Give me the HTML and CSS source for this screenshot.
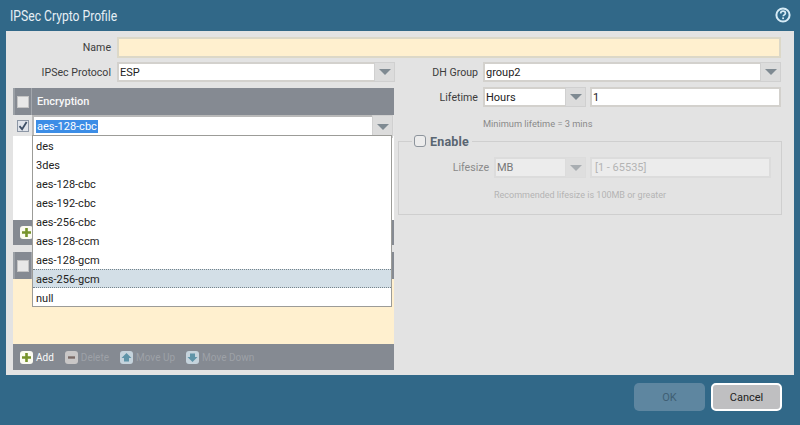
FILE: index.html
```html
<!DOCTYPE html>
<html lang="en">
<head>
<meta charset="utf-8">
<title>IPSec Crypto Profile</title>
<link rel="stylesheet" href="styles.css">
</head>
<body>
<div class="dialog">
  <header class="titlebar">
    <h1 class="title">IPSec Crypto Profile</h1>
    <svg class="help" viewBox="0 0 16 16" width="16" height="16" aria-hidden="true">
      <circle cx="8" cy="8" r="6.6" fill="#2f6a8c" stroke="#d6ebf6" stroke-width="2"/>
      <path d="M5.7 6.4c0-1.4 1-2.2 2.4-2.2s2.3.8 2.3 2c0 1.7-2.2 1.6-2.2 3.1" fill="none" stroke="#d6ebf6" stroke-width="1.7"/>
      <rect x="7.2" y="10.4" width="1.8" height="1.7" fill="#d6ebf6"/>
    </svg>
  </header>
  <main class="panel">
    <div class="row name-row">
      <label class="label label-main">Name</label>
      <div class="field field-req"></div>
    </div>
    <div class="columns">
      <section class="left">
        <div class="row proto-row">
          <label class="label label-main">IPSec Protocol</label>
          <div class="select grow"><span class="value">ESP</span><span class="arrow"><i></i></span></div>
        </div>
        <div class="grid enc">
          <div class="grid-head">
            <span class="head-check"><span class="check"></span></span>
            <span class="head-text">Encryption</span>
          </div>
          <div class="enc-row">
            <span class="check check-on">
              <svg viewBox="0 0 12 12" width="12" height="12" aria-hidden="true"><path d="M2.5 6.2l2.6 3L9.6 2" fill="none" stroke="#3d4f66" stroke-width="1.8"/></svg>
            </span>
            <div class="select combo"><span class="value"><span class="selected">aes-128-cbc</span></span><span class="arrow"><i></i></span></div>
          </div>
          <div class="enc-body"></div>
          <div class="toolbar toolbar-short">
            <svg class="tool-icon" viewBox="0 0 13 13" width="13" height="13" aria-hidden="true"><rect width="13" height="13" rx="3" fill="#fbfbf2"/><path d="M6.5 2v9M2 6.5h9" stroke="#76932b" stroke-width="2.6"/></svg>
          </div>
        </div>
        <div class="grid auth">
          <div class="grid-head">
            <span class="head-check"><span class="check"></span></span>
          </div>
          <div class="auth-body"></div>
          <div class="toolbar">
            <span class="tool tool-on">
              <svg class="tool-icon" viewBox="0 0 13 13" width="13" height="13" aria-hidden="true"><rect width="13" height="13" rx="3" fill="#fbfbf2"/><path d="M6.5 2v9M2 6.5h9" stroke="#76932b" stroke-width="2.6"/></svg>
              Add
            </span>
            <span class="tool">
              <svg class="tool-icon" viewBox="0 0 13 13" width="13" height="13" aria-hidden="true"><rect width="13" height="13" rx="3" fill="#c9c7c7"/><path d="M3 6.5h7" stroke="#7a6a66" stroke-width="2.4"/></svg>
              Delete
            </span>
            <span class="tool">
              <svg class="tool-icon" viewBox="0 0 13 13" width="13" height="13" aria-hidden="true"><rect width="13" height="13" rx="3" fill="#c5d3dc"/><path d="M6.5 2L11.5 7H9v3.5H4V7H1.5z" fill="#5f94a8"/></svg>
              Move Up
            </span>
            <span class="tool">
              <svg class="tool-icon" viewBox="0 0 13 13" width="13" height="13" aria-hidden="true"><rect width="13" height="13" rx="3" fill="#c5d3dc"/><path d="M6.5 11L11.5 6H9V2.5H4V6H1.5z" fill="#5f94a8"/></svg>
              Move Down
            </span>
          </div>
        </div>
      </section>
      <section class="right">
        <div class="row dh-row">
          <label class="label label-right">DH Group</label>
          <div class="select grow"><span class="value">group2</span><span class="arrow"><i></i></span></div>
        </div>
        <div class="row life-row">
          <label class="label label-right">Lifetime</label>
          <div class="select unit"><span class="value">Hours</span><span class="arrow"><i></i></span></div>
          <div class="field grow"><span class="value">1</span></div>
        </div>
        <p class="hint hint-life">Minimum lifetime = 3 mins</p>
        <fieldset class="lifesize">
          <legend class="legend"><span class="round-check"></span><span class="legend-text">Enable</span></legend>
          <div class="row size-row">
            <label class="label label-size">Lifesize</label>
            <div class="select unit-off off"><span class="value">MB</span><span class="arrow"><i></i></span></div>
            <div class="field off grow"><span class="value placeholder">[1 - 65535]</span></div>
          </div>
          <p class="hint hint-size">Recommended lifesize is 100MB or greater</p>
        </fieldset>
      </section>
    </div>
    <ul class="menu">
      <li>des</li>
      <li>3des</li>
      <li>aes-128-cbc</li>
      <li>aes-192-cbc</li>
      <li>aes-256-cbc</li>
      <li>aes-128-ccm</li>
      <li>aes-128-gcm</li>
      <li class="active">aes-256-gcm</li>
      <li>null</li>
    </ul>
  </main>
  <footer class="footer">
    <button class="btn btn-ok" type="button">OK</button>
    <button class="btn btn-cancel" type="button">Cancel</button>
  </footer>
</div>
</body>
</html>
```
FILE: styles.css
```css
* { box-sizing: border-box; }
html, body { margin: 0; padding: 0; }
body {
  width: 800px;
  height: 425px;
  overflow: hidden;
  background: #316888;
  font-family: "Roboto", "Liberation Sans", Arial, sans-serif;
  font-size: 11px;
  color: #222;
}
.dialog { display: flex; flex-direction: column; height: 425px; }
.titlebar {
  height: 31px;
  display: flex;
  align-items: center;
  justify-content: space-between;
  padding: 0 10px;
}
.title {
  margin: 1px 0 0;
  font-size: 15px;
  font-weight: 400;
  color: #e6eff5;
  transform: scaleX(0.81);
  transform-origin: left center;
}
.help { display: block; margin-top: -1px; margin-right: -1px; }
.panel {
  position: relative;
  height: 344px;
  margin: 0 6px;
  padding: 6px 13px 5px 7px;
  background: #e3e3e3;
}
.row { display: flex; align-items: stretch; }
.label { display: flex; align-items: center; justify-content: flex-end; color: #3c3c3c; font-size: 10.6px; }
.label-main { width: 104px; padding-right: 6px; flex: none; }
.name-row { height: 21px; }
.field, .select {
  display: flex;
  align-items: stretch;
  background: #fff;
  border: 2px solid #d3d1cd;
  height: 100%;
}
.field-req { flex: 1; background: #fff0cf; border-color: #dcd8c8; }
.grow { flex: 1; min-width: 0; }
.value { flex: 1; display: flex; align-items: center; padding-left: 1px; color: #222; }
.arrow {
  width: 21px;
  margin: -2px -2px -2px 0;
  background: #dcdcdc;
  border: 1px solid #d0d0d0;
  display: flex;
  align-items: center;
  justify-content: center;
}
.arrow i {
  width: 0;
  height: 0;
  border-left: 6px solid transparent;
  border-right: 6px solid transparent;
  border-top: 6px solid #7f8a92;
}
.columns { display: flex; margin-top: 4px; gap: 4px; }
.left { width: 381px; flex: none; }
.right { flex: 1; min-width: 0; }
.proto-row { height: 20px; margin-right: -1px; }
.proto-row .select, .dh-row .select { height: 20px; }
.grid { margin-top: 6px; }
.grid-head {
  display: flex;
  height: 27px;
  background: #858a92;
  color: #f8f8f8;
}
.head-check {
  width: 19px;
  display: flex;
  align-items: center;
  justify-content: center;
  border-right: 1px solid #a3a7ad;
  border-left: 2px solid #9ba0a6;
}
.head-text { display: flex; align-items: center; padding-left: 5px; font-weight: 500; }
.check {
  display: flex;
  align-items: center;
  justify-content: center;
  width: 12px;
  height: 12px;
  background: #e8e8e8;
  border: 1px solid #c4c4c4;
}
.check-on { background: #dfe3ea; border-color: #8d97a6; margin: 0 3px 0 4px; flex: none; }
.check-on svg { flex: none; margin: -1px; }
.enc-row {
  display: flex;
  align-items: center;
  height: 21px;
  background: #e5e5e5;
}
.combo { flex: 1; height: 21px; margin-right: 1px; border: 2px solid #b9b9b9; border-bottom: 0; }
.selected { background: #3c8de6; color: #fff; padding: 0 1px; line-height: 13px; margin-left: 1px; }
.enc-body { height: 84px; background: #fff; }
.toolbar {
  display: flex;
  align-items: center;
  gap: 11px;
  height: 26px;
  padding-left: 7px;
  background: #858a92;
}
.toolbar-short { height: 25px; }
.auth { margin-top: 7px; }
.auth-body { height: 65px; background: #fff0cf; }
.tool {
  display: flex;
  align-items: center;
  gap: 3px;
  color: #9da1a7;
  font-size: 10px;
}
.tool-on { color: #fafafa; }
.tool-icon { display: block; flex: none; }
.dh-row { height: 20px; }
.label-right { width: 85px; padding-right: 5px; flex: none; }
.life-row { height: 20px; margin-top: 5px; gap: 4px; }
.life-row .label { margin-right: -4px; }
.unit { width: 103px; flex: none; }
.hint { margin: 0; font-size: 9px; color: #9a9a9a; }
.hint-life { height: 27px; padding: 11px 0 0 85px; font-size: 9.25px; color: #8a8a8a; }
.lifesize {
  margin: 0;
  padding: 0 10px 0 0;
  height: 81px;
  width: 384px;
  border: 1px solid #cfcfcf;
  border-radius: 0;
}
.legend {
  display: flex;
  align-items: center;
  gap: 4px;
  margin-left: 13px;
  padding: 0 3px 0 2px;
  height: 14px;
}
.round-check {
  width: 12px;
  height: 12px;
  border: 1px solid #8d949c;
  border-radius: 3px;
  background: #ececec;
}
.legend-text { font-weight: 700; color: #5a6672; font-size: 12.5px; letter-spacing: 0.2px; }
.size-row { height: 21px; margin-top: 9px; gap: 4px; }
.label-size { width: 95px; padding-right: 5px; margin-right: -4px; flex: none; color: #8a8a8a; }
.unit-off { width: 92px; flex: none; }
.off { background: #ececec; border-color: #dcdcdc; }
.off .value { color: #777; }
.off .arrow { background: #dedede; border-color: #dcdcdc; }
.off .arrow i { border-top-color: #a9aeb2; }
.value.placeholder { color: #b4b4b4; padding-left: 3px; }
.hint-size { padding: 12px 0 0 95px; color: #b4b4b4; }
.menu {
  position: absolute;
  left: 26px;
  top: 104px;
  width: 360px;
  height: 172px;
  margin: 0;
  padding: 0;
  list-style: none;
  background: #fff;
  border: 1px solid #9c9c98;
}
.menu li {
  height: 19px;
  line-height: 21px;
  padding-left: 3px;
  color: #222;
}
.menu li.active {
  background: #d3dfe7;
  border-top: 1px dotted #76848c;
  border-bottom: 1px dotted #76848c;
  line-height: 19px;
}
.footer {
  display: flex;
  justify-content: flex-end;
  align-items: center;
  gap: 6px;
  height: 50px;
  padding: 0 18px 6px 0;
}
.btn {
  font-family: "Roboto", Arial, sans-serif;
  font-size: 11px;
  height: 28px;
  border-radius: 5px;
  padding: 0;
}
.btn-ok { width: 71px; background: #5e86a0; color: #3f5f74; border: 0; }
.btn-cancel { width: 71px; background: #bfbfc1; color: #222; border: 2px solid #fff; }
```
